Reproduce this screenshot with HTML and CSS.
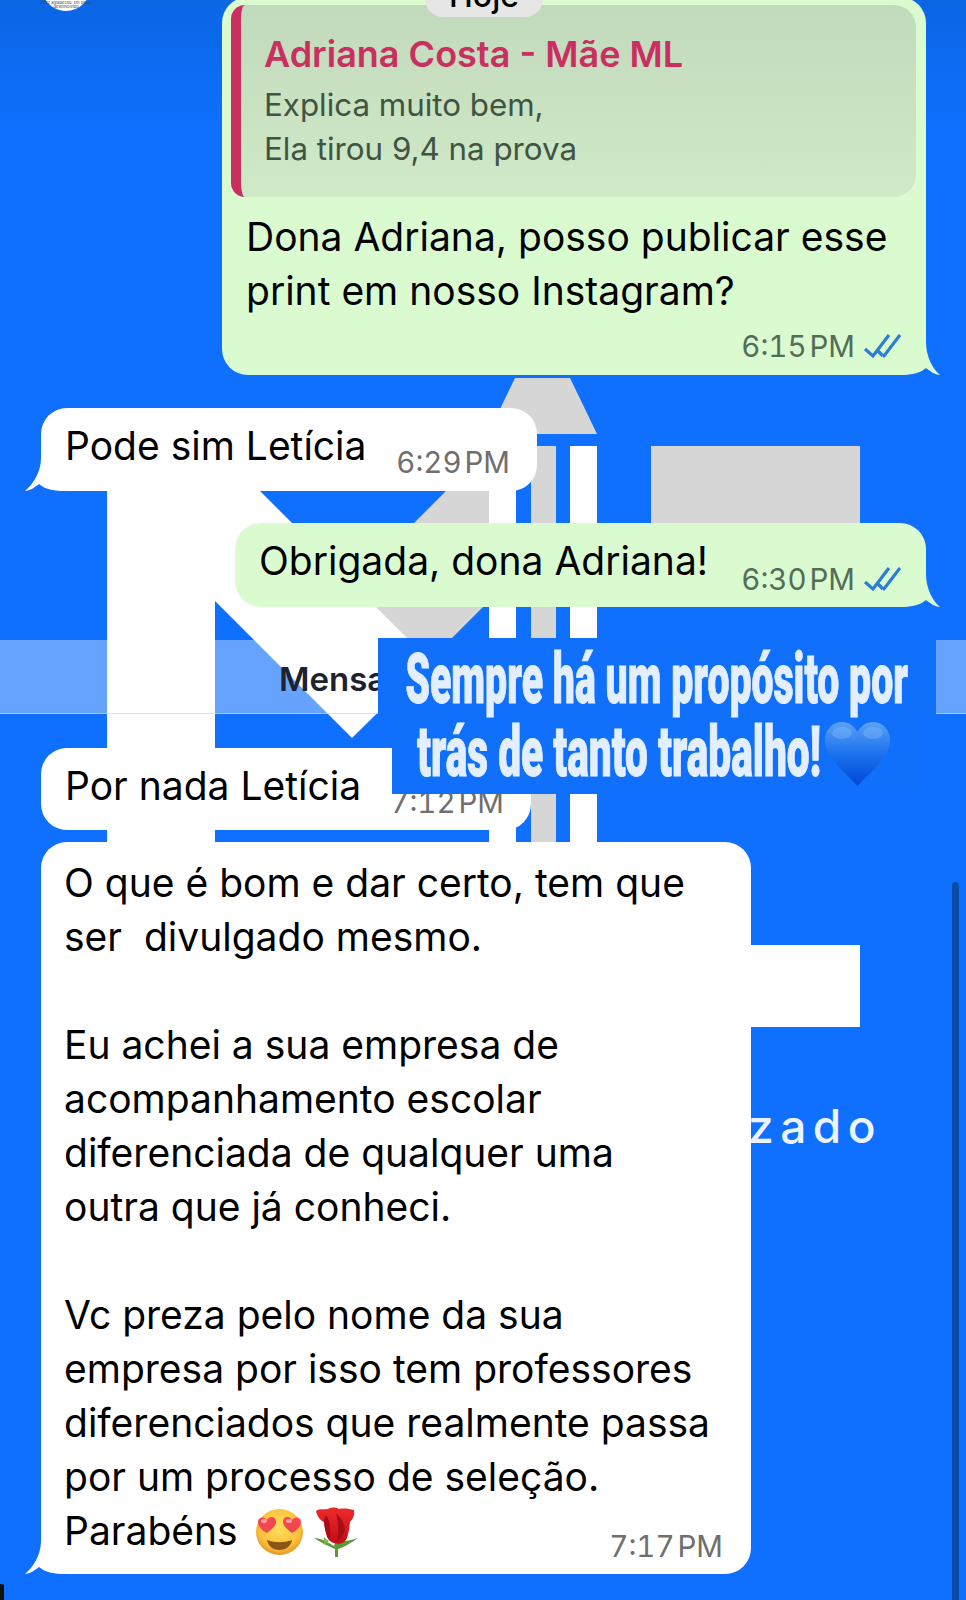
FILE: index.html
```html
<!DOCTYPE html>
<html>
<head>
    <meta charset="utf-8">
    <link rel="stylesheet" href="styles.css">
</head>
<body>
    <!-- wallpaper logo behind the chat -->
    <svg class="wallpaper" width="966" height="1600" viewBox="0 0 966 1600">
        <polygon points="489,448 350,587 420,670 489,601" fill="#d6d6d6"/>
        <rect x="107" y="420" width="108" height="440" fill="#fff"/>
        <polygon points="214,445 430,661 352,738 214,600" fill="#fff"/>
        <polygon points="515,378 570,378 597,434 488,434" fill="#d6d6d6"/>
        <rect x="489" y="440" width="27" height="420" fill="#fff"/>
        <rect x="531" y="446" width="25" height="414" fill="#d6d6d6"/>
        <rect x="570" y="446" width="27" height="414" fill="#fff"/>
        <rect x="651" y="446" width="209" height="150" fill="#d6d6d6"/>
        <rect x="700" y="945" width="160" height="82" fill="#fff"/>
        <text class="wallpaper-text" x="748" y="1143">zado</text>
    </svg>

    <div class="avatar">
        <span>a fez agradeceu. Em pleno</span>
        <span>desenvolvido</span>
    </div>

    <div class="chat">
        <div class="bubble own bubble-reply">
            <div class="reply">
                <div class="reply-name">Adriana Costa - Mãe ML</div>
                <div class="reply-text">Explica muito bem,</div>
                <div class="reply-text">Ela tirou 9,4 na prova</div>
            </div>
            <div class="msg msg-reply">Dona Adriana, posso publicar esse
print em nosso Instagram?</div>
            <div class="meta meta-reply">
                <span class="time">6:15 PM</span>
                <svg class="ticks" width="38" height="26" viewBox="0 0 38 26"><path d="M2 16l8 7L26 2M20 23l1 0L37 2M15 18l5 5" fill="none" stroke="#2a7dd8" stroke-width="3.200"/></svg>
            </div>
            <svg class="tail tail-right" width="40" height="34" viewBox="0 0 40 34"><path d="M0 33c10 0 19-1 26-7 4 3 9 7 14 7-7-6-14-18-14-33H0z" fill="#dafbd0"/></svg>
        </div>

        <div class="bubble other bubble-short bubble-pode">
            <div class="msg">Pode sim Letícia</div>
            <span class="time time-other">6:29 PM</span>
            <svg class="tail tail-left" width="40" height="34" viewBox="0 0 40 34"><path d="M40 33c-10 0-19-1-26-7-4 3-9 7-14 7 7-6 16-18 16-33h24z" fill="#fff"/></svg>
        </div>

        <div class="bubble own bubble-short bubble-thanks">
            <div class="msg">Obrigada, dona Adriana!</div>
            <div class="meta">
                <span class="time">6:30 PM</span>
                <svg class="ticks" width="38" height="26" viewBox="0 0 38 26"><path d="M2 16l8 7L26 2M20 23l1 0L37 2M15 18l5 5" fill="none" stroke="#2a7dd8" stroke-width="3.200"/></svg>
            </div>
            <svg class="tail tail-right" width="40" height="34" viewBox="0 0 40 34"><path d="M0 33c10 0 19-1 26-7 4 3 9 7 14 7-7-6-14-18-14-33H0z" fill="#dafbd0"/></svg>
        </div>

        <div class="unread">Mensagens não lidas</div>

        <div class="bubble other bubble-short bubble-nada">
            <div class="msg">Por nada Letícia</div>
            <span class="time time-other">7:12 PM</span>
        </div>

        <div class="bubble other bubble-long">
            <div class="msg">O que é bom e dar certo, tem que
ser  divulgado mesmo.

Eu achei a sua empresa de
acompanhamento escolar
diferenciada de qualquer uma
outra que já conheci.

Vc preza pelo nome da sua
empresa por isso tem professores
diferenciados que realmente passa
por um processo de seleção.</div>
            <div class="last-line">
                <span class="msg">Parabéns</span>
                <svg class="emoji-face" width="47" height="46" viewBox="0 0 47 46">
                    <defs>
                        <radialGradient id="faceFill" cx="50%" cy="40%" r="60%">
                            <stop offset="0" stop-color="#ffdf5c"/>
                            <stop offset="0.75" stop-color="#fbbf3a"/>
                            <stop offset="1" stop-color="#e8932a"/>
                        </radialGradient>
                    </defs>
                    <ellipse cx="23.500" cy="23" rx="23.500" ry="23" fill="url(#faceFill)"/>
                    <path d="M11 11c3-5 9-3 9 2 0 4-5 8-9 11-4-2-9-6-9-11 0-5 6-6 9-2z" fill="#f2474f"/>
                    <path d="M36 11c3-4 9-3 9 2 0 5-5 9-9 11-4-3-9-7-9-11 0-5 6-7 9-2z" fill="#f2474f"/>
                    <ellipse cx="8" cy="12" rx="3" ry="2" fill="#ff9a9e"/>
                    <ellipse cx="33" cy="12" rx="3" ry="2" fill="#ff9a9e"/>
                    <path d="M11 31c8 3 17 3 25 0-1 6-6 10-12.500 10S12 37 11 31z" fill="#8a5516"/>
                </svg>
                <svg class="emoji-rose" width="44" height="50" viewBox="0 0 44 50">
                    <defs>
                        <linearGradient id="roseFill" x1="0" y1="0" x2="0" y2="1">
                            <stop offset="0" stop-color="#ee2a2a"/>
                            <stop offset="1" stop-color="#c10f18"/>
                        </linearGradient>
                    </defs>
                    <path d="M0 31c7 0 13 4 20 8 1-4 3-7 5-8 5 5 12 2 19 0-6 4-13 9-20 11l0 8h-3l0-8C14 39 6 35 0 31z" fill="#5d9a3a"/>
                    <path d="M2 4c4-3 8-1 12-2 3-2 8-2 11 0 5-1 11 0 15 1 1 5-1 9-4 12-1 9-2 17-6 20-4 3-10 2-14-1-4-3-5-12-6-19C6 13 3 9 2 4z" fill="url(#roseFill)"/>
                    <path d="M12 8c4 5 5 15 4 25-3-3-6-12-6-20zM22 6c5 5 9 10 9 18-2 5-5 9-8 10 2-10 1-20-1-28z" fill="#a80e17"/>
                    <path d="M10 30c2 2 3 3 5 4l-5 4z" fill="#7fb552"/>
                </svg>
                <span class="time time-other time-last">7:17 PM</span>
            </div>
            <svg class="tail tail-left" width="40" height="34" viewBox="0 0 40 34"><path d="M40 33c-10 0-19-1-26-7-4 3-9 7-14 7 7-6 16-18 16-33h24z" fill="#fff"/></svg>
        </div>
    </div>

    <div class="hoje"><span>Hoje</span></div>

    <div class="scrollbar"></div>
    <div class="corner"></div>

    <!-- story sticker on top of the print -->
    <div class="sticker">
        <div class="sticker-line sticker-line-top">
            <span class="sticker-text text-top">Sempre há um propósito por</span>
        </div>
        <div class="sticker-line sticker-line-bottom">
            <span class="sticker-text text-bottom">trás de tanto trabalho!</span>
            <svg class="heart" width="65" height="64" viewBox="0 0 65 64">
                <defs>
                    <linearGradient id="heartFill" x1="0" y1="0" x2="0" y2="1">
                        <stop offset="0" stop-color="#5aa2f5"/>
                        <stop offset="0.5" stop-color="#1c71ee"/>
                        <stop offset="1" stop-color="#0047d6"/>
                    </linearGradient>
                </defs>
                <path d="M32.500 64C20 50 0 36 0 18 0 7 8 0 17 0c7 0 12 4 15.500 10C36 4 41 0 48 0c9 0 17 7 17 18 0 18-20 32-32.500 46z" fill="url(#heartFill)"/>
                <ellipse cx="17" cy="11" rx="10" ry="6" fill="#8cc0fa" opacity="0.35"/>
                <ellipse cx="48" cy="11" rx="10" ry="6" fill="#8cc0fa" opacity="0.35"/>
            </svg>
        </div>
    </div>
</body>
</html>
```

FILE: styles.css
```css
* {
    box-sizing: border-box;
}
body {
    margin: 0;
    width: 966px;
    height: 1600px;
    overflow: hidden;
    position: relative;
    background: linear-gradient(#0b66e4, #0f70ff 130px);
    font-family: Inter, "Liberation Sans", sans-serif;
}
.wallpaper {
    position: absolute;
    left: 0;
    top: 0;
}
.wallpaper-text {
    font-family: Inter, sans-serif;
    font-size: 46px;
    font-weight: 500;
    letter-spacing: 6.500px;
    fill: #fff;
    opacity: 0.92;
}
.avatar {
    position: absolute;
    left: 41px;
    top: -40px;
    width: 50px;
    height: 51px;
    border-radius: 50%;
    background: #fff;
    display: flex;
    flex-direction: column;
    justify-content: flex-end;
    align-items: center;
    padding-bottom: 2px;
    font-size: 4px;
    line-height: 4px;
    color: #444;
    white-space: nowrap;
}

.chat {
    position: relative;
    display: flex;
    flex-direction: column;
}
.bubble {
    position: relative;
    border-radius: 26px;
    flex-shrink: 0;
}
.own {
    background: #dafbd0;
    align-self: flex-end;
    margin-right: 40px;
}
.other {
    background: #fff;
    align-self: flex-start;
    margin-left: 41px;
}
.msg {
    font-size: 39px;
    line-height: 54px;
    color: #000;
    white-space: pre-wrap;
}
.time {
    font-size: 29.500px;
    line-height: 34px;
    color: #546d58;
    font-variant-numeric: tabular-nums;
    word-spacing: -5px;
    white-space: nowrap;
}
.time-other {
    color: #6f6f6f;
}
.ticks {
    flex-shrink: 0;
}
.tail {
    position: absolute;
    bottom: -1px;
}
.tail-right {
    right: -14px;
}
.tail-left {
    left: -16px;
}

.bubble-reply {
    width: 704px;
    height: 378px;
    margin-top: -3px;
    padding: 8px 10px 0 9px;
}
.reply {
    height: 192px;
    border-left: 10px solid #c92f60;
    border-radius: 14px 22px 22px 14px;
    background: linear-gradient(#c2dabc, #d0e9c7);
    padding: 27px 0 0 23px;
}
.reply-name {
    font-size: 36px;
    line-height: 44px;
    font-weight: 600;
    color: #c92f60;
    margin-bottom: 7px;
}
.reply-text {
    font-size: 31.300px;
    line-height: 44px;
    color: #3f5443;
}
.msg-reply {
    margin: 13px 0 0 15px;
}
.meta {
    display: flex;
    align-items: center;
    gap: 8px;
}
.meta-reply {
    justify-content: flex-end;
    margin: 11px 15px 0 0;
}

.bubble-short {
    display: flex;
    justify-content: space-between;
    height: 83px;
    margin-top: 33px;
    padding: 11px 27px 0 24px;
}
.bubble-short .time {
    margin-top: 26px;
}
.bubble-pode {
    width: 496px;
}
.bubble-thanks {
    width: 691px;
    margin-top: 32px;
    height: 84px;
    padding-right: 25px;
}
.bubble-thanks .meta {
    align-self: flex-start;
    margin-top: 28px;
}
.bubble-thanks .time {
    margin-top: 0;
}
.bubble-nada {
    width: 490px;
    height: 82px;
    margin-top: 34px;
}
.bubble-long {
    width: 710px;
    margin-top: 12px;
    padding: 14px 28px 16px 23px;
}
.last-line {
    display: flex;
    align-items: flex-start;
    height: 54px;
}
.emoji-face {
    margin: 5px 0 0 18px;
}
.emoji-rose {
    margin: 3px 0 0 11px;
}
.time-last {
    margin: 25px 0 0 auto;
}

.unread {
    height: 74px;
    margin-top: 33px;
    padding-left: 279px;
    background: rgba(255, 255, 255, 0.36);
    border-bottom: 1px solid rgba(210, 215, 225, 0.7);
    font-size: 33px;
    font-weight: 600;
    line-height: 78px;
    color: #1d2230;
    white-space: nowrap;
}

.hoje {
    position: absolute;
    left: 425px;
    top: -16px;
    width: 118px;
    height: 33px;
    border-radius: 0 0 18px 18px;
    background: #e6e6e6;
    text-align: center;
    font-size: 32px;
    font-weight: 500;
    line-height: 24px;
    color: #000;
}
.scrollbar {
    position: absolute;
    right: 7px;
    top: 882px;
    width: 7px;
    height: 730px;
    border-radius: 4px;
    background: #0a4ba8;
}
.corner {
    position: absolute;
    left: -12px;
    top: 1584px;
    width: 24px;
    height: 30px;
    border-radius: 50%;
    background: #111;
    clip-path: inset(0 8px 0 0);
}

.sticker {
    position: absolute;
    left: 378px;
    top: 638px;
    width: 558px;
    display: flex;
    flex-direction: column;
    align-items: center;
}
.sticker-line {
    display: flex;
    background: #1070fb;
    height: 78px;
    white-space: nowrap;
}
.sticker-line-top {
    width: 558px;
    justify-content: center;
}
.sticker-line-bottom {
    width: 530px;
}
.sticker-text {
    font-family: Roboto, sans-serif;
    font-size: 70px;
    font-weight: 900;
    line-height: 78px;
    color: #e3efff;
    -webkit-text-stroke: 1px #e3efff;
    flex-shrink: 0;
    transform: scaleX(0.56);
}
.text-top {
    margin-top: 2px;
}
.text-bottom {
    margin: -3px -293px 0 25px;
    transform: scaleX(0.58);
    transform-origin: left center;
}
.heart {
    flex-shrink: 0;
    margin: 6px 0 0 5px;
}
```
